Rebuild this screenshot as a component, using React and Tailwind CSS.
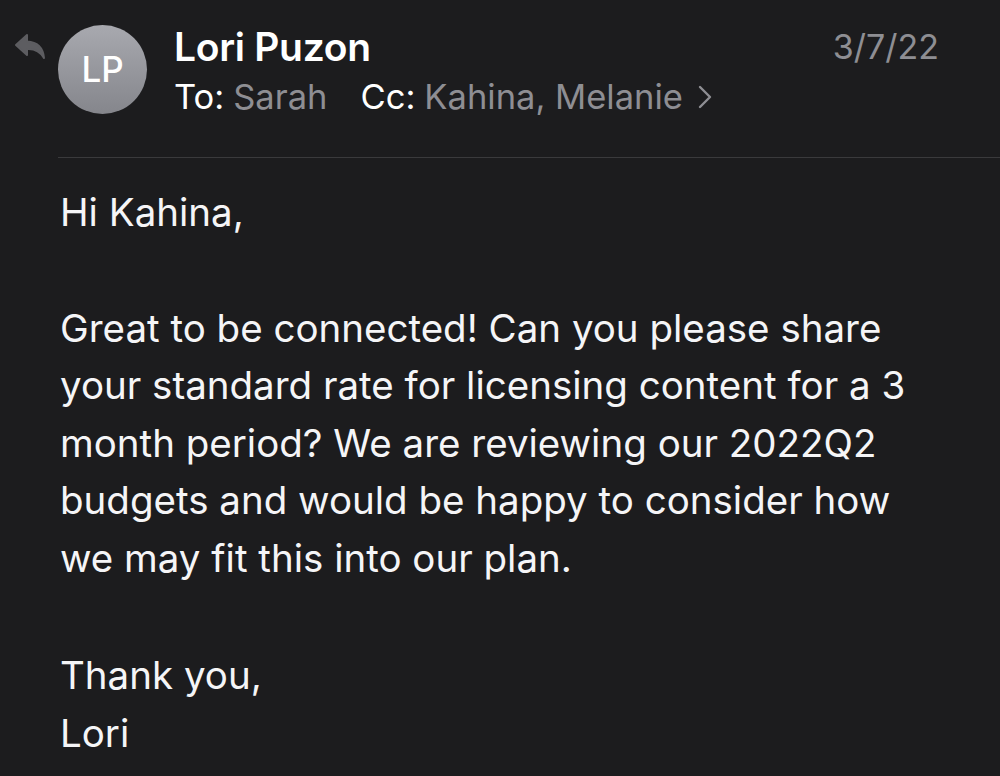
export default function App() {
  return (
    <div
      className="w-[1000px] h-[776px] bg-[#1c1c1e] text-white overflow-hidden"
      style={{ fontFamily: 'Inter, "Noto Sans", sans-serif' }}
    >
      {/* Header */}
      <div className="flex items-start pt-[25px]">
        <div className="w-[58px] flex justify-center pt-[8px]">
          <svg width="32" height="28" viewBox="0 0 32 28" className="ml-[2px]">
            <path
              d="M13 2 L2 12 L13 22 L13 16 C20 15.5 26 18 30 25 C29 15 23 9 13 8.5 Z"
              fill="#5d5d61"
              stroke="#5d5d61"
              strokeWidth="2"
              strokeLinejoin="round"
            />
          </svg>
        </div>
        <div className="w-[89px] h-[89px] rounded-full bg-gradient-to-b from-[#a8a9af] to-[#85868c] flex items-center justify-center shrink-0">
          <span className="text-[35px] font-medium">LP</span>
        </div>
        <div className="ml-[27px] flex-1">
          <div className="flex justify-between">
            <div className="text-[39px] font-semibold leading-[44px] tracking-[-0.3px]">Lori Puzon</div>
            <div className="text-[34px] text-[#8e8e93] leading-[44px] mr-[61px]">3/7/22</div>
          </div>
          <div className="text-[34.5px] leading-[40px] mt-[8px] flex items-center">
            <span>To:</span>
            <span className="ml-[9px] text-[#8e8e93]">Sarah</span>
            <span className="ml-[33px]">Cc:</span>
            <span className="ml-[9px] text-[#8e8e93]">Kahina, Melanie</span>
            <svg width="16" height="26" viewBox="0 0 16 26" className="ml-[14px]">
              <path d="M3 3 L13 13 L3 23" fill="none" stroke="#8e8e93" strokeWidth="2.4" strokeLinecap="round" strokeLinejoin="round" />
            </svg>
          </div>
        </div>
      </div>

      <div className="ml-[58px] mt-[40px] h-[1px] bg-[#3a3a3c]" />

      {/* Body */}
      <div className="pl-[60px] pr-[20px] pt-[26px] text-[38.5px] leading-[57.5px] text-[#f5f5f7] whitespace-nowrap">
        <p>Hi Kahina,</p>
        <p className="mt-[58px]">
          Great to be connected! Can you please share
          <br />
          your standard rate for licensing content for a 3
          <br />
          month period? We are reviewing our 2022Q2
          <br />
          budgets and would be happy to consider how
          <br />
          we may fit this into our plan.
        </p>
        <p className="mt-[60px]">
          Thank you,
          <br />
          Lori
        </p>
      </div>
    </div>
  );
}
